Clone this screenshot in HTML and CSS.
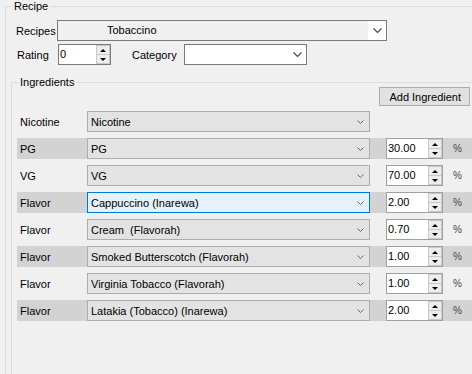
FILE: index.html
```html
<!DOCTYPE html>
<html lang="en">
<head>
    <meta charset="UTF-8">
    <meta name="viewport" content="width=device-width, initial-scale=1.0">
    <title>Recipe</title>
    <link rel="stylesheet" href="styles.css">
</head>
<body>
    <fieldset class="group outer">
        <legend>Recipe</legend>

        <div class="field-row">
            <label class="lbl lbl-recipes">Recipes</label>
            <div class="select select-recipes">
                <span class="select-text">Tobaccino</span>
                <span class="select-btn">
                    <svg width="9" height="5" viewBox="0 0 9 5"><polyline points="0.5,0.5 4.5,4.5 8.5,0.5" fill="none" stroke="#444" stroke-width="1.1"/></svg>
                </span>
            </div>
        </div>

        <div class="field-row second">
            <label class="lbl lbl-rating">Rating</label>
            <div class="num num-rating">
                <span class="num-text">0</span>
                <span class="spin"><span class="spin-up"><i></i></span><span class="spin-down"><i></i></span></span>
            </div>
            <label class="lbl lbl-category">Category</label>
            <div class="select select-category">
                <span class="select-text"></span>
                <span class="select-btn">
                    <svg width="9" height="5" viewBox="0 0 9 5"><polyline points="0.5,0.5 4.5,4.5 8.5,0.5" fill="none" stroke="#444" stroke-width="1.1"/></svg>
                </span>
            </div>
        </div>

        <!-- ingredient list -->
        <fieldset class="group inner">
            <legend>Ingredients</legend>
            <div class="toolbar">
                <button type="button" class="btn">Add Ingredient</button>
            </div>

            <div class="ing-list">
                <div class="ing-row">
                    <span class="ing-label">Nicotine</span>
                    <div class="combo"><span class="combo-text">Nicotine</span><svg class="chev" width="7" height="4" viewBox="0 0 7 4"><polyline points="0.5,0.5 3.5,3.5 6.5,0.5" fill="none" stroke="#666" stroke-width="1"/></svg></div>
                </div>
                <div class="ing-row alt">
                    <span class="ing-label">PG</span>
                    <div class="combo"><span class="combo-text">PG</span><svg class="chev" width="7" height="4" viewBox="0 0 7 4"><polyline points="0.5,0.5 3.5,3.5 6.5,0.5" fill="none" stroke="#666" stroke-width="1"/></svg></div>
                    <div class="num num-amount"><span class="num-text">30.00</span><span class="spin"><span class="spin-up"><i></i></span><span class="spin-down"><i></i></span></span></div>
                    <span class="pct">%</span>
                </div>
                <div class="ing-row">
                    <span class="ing-label">VG</span>
                    <div class="combo"><span class="combo-text">VG</span><svg class="chev" width="7" height="4" viewBox="0 0 7 4"><polyline points="0.5,0.5 3.5,3.5 6.5,0.5" fill="none" stroke="#666" stroke-width="1"/></svg></div>
                    <div class="num num-amount"><span class="num-text">70.00</span><span class="spin"><span class="spin-up"><i></i></span><span class="spin-down"><i></i></span></span></div>
                    <span class="pct">%</span>
                </div>
                <div class="ing-row alt">
                    <span class="ing-label">Flavor</span>
                    <div class="combo focused"><span class="combo-text">Cappuccino (Inarewa)</span><svg class="chev" width="7" height="4" viewBox="0 0 7 4"><polyline points="0.5,0.5 3.5,3.5 6.5,0.5" fill="none" stroke="#666" stroke-width="1"/></svg></div>
                    <div class="num num-amount"><span class="num-text">2.00</span><span class="spin"><span class="spin-up"><i></i></span><span class="spin-down"><i></i></span></span></div>
                    <span class="pct">%</span>
                </div>
                <div class="ing-row">
                    <span class="ing-label">Flavor</span>
                    <div class="combo"><span class="combo-text">Cream&nbsp; (Flavorah)</span><svg class="chev" width="7" height="4" viewBox="0 0 7 4"><polyline points="0.5,0.5 3.5,3.5 6.5,0.5" fill="none" stroke="#666" stroke-width="1"/></svg></div>
                    <div class="num num-amount"><span class="num-text">0.70</span><span class="spin"><span class="spin-up"><i></i></span><span class="spin-down"><i></i></span></span></div>
                    <span class="pct">%</span>
                </div>
                <div class="ing-row alt">
                    <span class="ing-label">Flavor</span>
                    <div class="combo"><span class="combo-text">Smoked Butterscotch (Flavorah)</span><svg class="chev" width="7" height="4" viewBox="0 0 7 4"><polyline points="0.5,0.5 3.5,3.5 6.5,0.5" fill="none" stroke="#666" stroke-width="1"/></svg></div>
                    <div class="num num-amount"><span class="num-text">1.00</span><span class="spin"><span class="spin-up"><i></i></span><span class="spin-down"><i></i></span></span></div>
                    <span class="pct">%</span>
                </div>
                <div class="ing-row">
                    <span class="ing-label">Flavor</span>
                    <div class="combo"><span class="combo-text">Virginia Tobacco (Flavorah)</span><svg class="chev" width="7" height="4" viewBox="0 0 7 4"><polyline points="0.5,0.5 3.5,3.5 6.5,0.5" fill="none" stroke="#666" stroke-width="1"/></svg></div>
                    <div class="num num-amount"><span class="num-text">1.00</span><span class="spin"><span class="spin-up"><i></i></span><span class="spin-down"><i></i></span></span></div>
                    <span class="pct">%</span>
                </div>
                <div class="ing-row alt">
                    <span class="ing-label">Flavor</span>
                    <div class="combo"><span class="combo-text">Latakia (Tobacco) (Inarewa)</span><svg class="chev" width="7" height="4" viewBox="0 0 7 4"><polyline points="0.5,0.5 3.5,3.5 6.5,0.5" fill="none" stroke="#666" stroke-width="1"/></svg></div>
                    <div class="num num-amount"><span class="num-text">2.00</span><span class="spin"><span class="spin-up"><i></i></span><span class="spin-down"><i></i></span></span></div>
                    <span class="pct">%</span>
                </div>
            </div>
        </fieldset>
    </fieldset>
</body>
</html>
```

FILE: styles.css
```css
html, body {
    margin: 0;
    padding: 0;
    background-color: #f0f0f0;
    overflow: hidden;
}
body {
    width: 472px;
    height: 374px;
    font-family: "Liberation Sans", Arial, sans-serif;
    font-size: 11px;
    color: #000;
}
.group {
    margin: 0 0 0 5px;
    padding: 7px 0 0 5px;
    border: 1px solid #dcdcdc;
    border-right: 0;
    border-bottom: 0;
    min-width: 0;
    box-sizing: border-box;
}
.outer {
    height: 374px;
}
.group legend {
    margin-left: 1px;
    padding: 0 2px;
    line-height: 13px;
    font-size: 11px;
}
.field-row {
    display: flex;
    align-items: center;
    height: 21px;
}
.field-row.second {
    margin-top: 3px;
}
.lbl {
    flex: none;
}
.lbl-recipes {
    width: 41px;
    margin-left: 5px;
}
.lbl-rating {
    width: 41px;
    margin-left: 6px;
}
.lbl-category {
    width: 52px;
    margin-left: 21px;
}
.select {
    display: flex;
    align-items: stretch;
    height: 21px;
    box-sizing: border-box;
    border: 1px solid #7a7a7a;
    background-color: #f0f0f0;
}
.select-recipes {
    width: 330px;
}
.select-category {
    width: 123px;
    background-color: #fff;
}
.select-text {
    flex: 1;
    line-height: 19px;
}
.select-recipes .select-text {
    padding-left: 49px;
}
.select-btn {
    width: 18px;
    display: flex;
    align-items: center;
    justify-content: center;
    background-color: #fff;
}
.num {
    display: flex;
    height: 21px;
    box-sizing: border-box;
    border: 1px solid #a0a0a0;
    background-color: #fff;
}
.num-rating {
    width: 53px;
    border-color: #7a7a7a;
}
.num-text {
    flex: 1;
    padding-left: 1px;
    line-height: 19px;
}
.spin {
    width: 14px;
    display: flex;
    flex-direction: column;
}
.spin-up, .spin-down {
    flex: 1;
    display: flex;
    align-items: center;
    justify-content: center;
    border: 1px solid #c8c8c8;
    background-color: #ededed;
}
.spin-down {
    border-top: 0;
}
.spin-up i {
    width: 0;
    height: 0;
    border-left: 3px solid transparent;
    border-right: 3px solid transparent;
    border-bottom: 3px solid #000;
}
.spin-down i {
    width: 0;
    height: 0;
    border-left: 3px solid transparent;
    border-right: 3px solid transparent;
    border-top: 3px solid #000;
}

.inner {
    margin: 11px 0 0 0;
    padding: 0 0 0 5px;
    height: 298px;
}
.toolbar {
    display: flex;
    justify-content: flex-end;
    margin-top: -2px;
}
.btn {
    width: 91px;
    height: 19px;
    margin-right: 2px;
    padding: 0 8px 0 0;
    border: 1px solid #adadad;
    background-color: #e1e1e1;
    font-family: "Liberation Sans", Arial, sans-serif;
    font-size: 11px;
    color: #000;
    text-align: right;
}
.ing-list {
    display: flex;
    flex-direction: column;
    gap: 6px;
    margin-top: 5px;
}
.ing-row {
    display: flex;
    align-items: center;
    height: 21px;
}
.ing-row.alt {
    background-color: #d3d3d3;
}
.ing-label {
    width: 70px;
    padding-left: 3px;
    box-sizing: border-box;
    flex: none;
}
.combo {
    width: 283px;
    height: 21px;
    box-sizing: border-box;
    display: flex;
    align-items: center;
    border: 1px solid #adadad;
    background-color: #e3e3e3;
    flex: none;
}
.combo.focused {
    border-color: #0078d7;
    background-color: #e5f1fb;
}
.combo-text {
    flex: 1;
    padding-left: 3px;
    white-space: nowrap;
}
.chev {
    margin-right: 5px;
}
.num-amount {
    width: 57px;
    margin-left: 16px;
    flex: none;
}
.pct {
    margin-left: 10px;
    font-size: 10px;
    color: #444;
}
```
